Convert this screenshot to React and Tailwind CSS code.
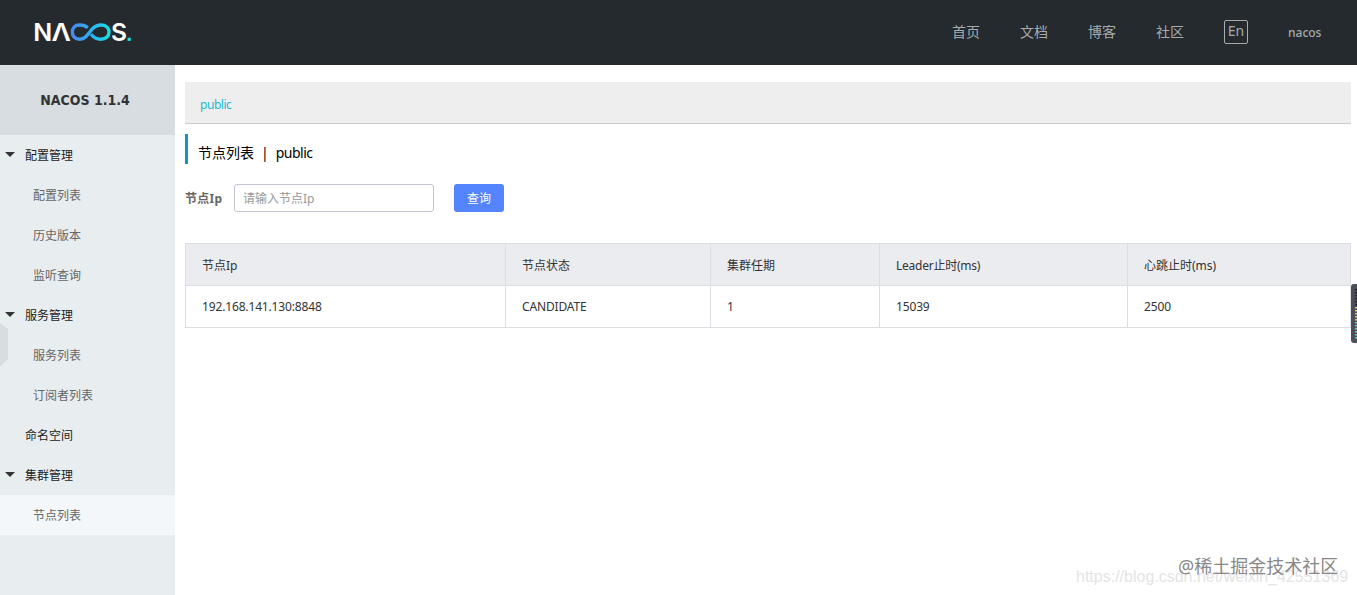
import { useState } from "react";

const navLinks = ["首页", "文档", "博客", "社区"];

const menu = [
  { title: "配置管理", children: ["配置列表", "历史版本", "监听查询"] },
  { title: "服务管理", children: ["服务列表", "订阅者列表"] },
  { title: "命名空间" },
  { title: "集群管理", children: ["节点列表"] },
];

const columns = ["节点Ip", "节点状态", "集群任期", "Leader止时(ms)", "心跳止时(ms)"];
const rows = [["192.168.141.130:8848", "CANDIDATE", "1", "15039", "2500"]];

function Logo() {
  return (
    <svg width="104" height="40" viewBox="-2 -8.5 104 40" className="ml-[31px] font-['Inter',sans-serif]">
      <defs>
        <linearGradient id="loop" x1="38" y1="0" x2="78" y2="0" gradientUnits="userSpaceOnUse">
          <stop offset="0" stopColor="#4a86f0" />
          <stop offset="0.5" stopColor="#2fb0ee" />
          <stop offset="1" stopColor="#17e0e3" />
        </linearGradient>
      </defs>
      <g fill="#fff" fontSize="24" fontWeight="600">
        <text x="0.3" y="19.3" textLength="19" lengthAdjust="spacingAndGlyphs">N</text>
        <text x="18.6" y="19.3" textLength="19.4" lengthAdjust="spacingAndGlyphs">Λ</text>
        <text x="78" y="19.3" textLength="16" lengthAdjust="spacingAndGlyphs">S</text>
      </g>
      <path
        d="M54.8 6.2C52.5 4.3 50 3.5 46.8 3.5C42 3.5 39.3 6.3 39.3 10.6S42 17.7 46.8 17.7C51.5 17.7 53.8 14.8 56.6 10.8C59.5 6.3 62.3 3.5 67.8 3.5C73 3.5 76 6.3 76 10.6S73 17.7 67.8 17.7C63.3 17.7 60.5 16 58 12.8"
        fill="none"
        stroke="url(#loop)"
        strokeWidth="3.4"
      />
      <rect x="94.6" y="16.2" width="3.2" height="3.2" fill="#17e0e3" />
    </svg>
  );
}

function Header() {
  return (
    <header className="flex h-[65px] items-center bg-[#252a2f] text-[#a8aaac]">
      <Logo />
      <nav className="ml-auto flex items-center gap-10 pr-9 pb-0.5 text-sm">
        {navLinks.map((link) => (
          <a key={link} className="w-7 whitespace-nowrap">{link}</a>
        ))}
        <span className="flex h-6 w-6 items-center justify-center rounded-xs border border-[#a8aaac] pb-0.5">
          En
        </span>
        <span className="w-[33px] pt-0.5 text-xs font-medium">nacos</span>
      </nav>
    </header>
  );
}

function Sidebar() {
  return (
    <aside className="relative h-[530px] w-[175px] shrink-0 bg-[#e8edf0]">
      <h1 className="flex h-[70px] items-center justify-center bg-[#d7dde1] pr-[5px] font-['DejaVu_Sans_Condensed','DejaVu_Sans',sans-serif] text-sm font-bold text-[#333]">
        NACOS 1.1.4
      </h1>
      <ul>
        {menu.map((group) => (
          <li key={group.title}>
            <div className="flex h-10 items-center pt-0.5 text-[#222]">
              <span className="flex w-[25px] pb-1 pl-[5px]">
                {group.children && (
                  <svg width="10" height="5" viewBox="0 0 10 5">
                    <path d="M0 0h10L5 5z" fill="#333" />
                  </svg>
                )}
              </span>
              {group.title}
            </div>
            {group.children?.map((item) => (
              <div
                key={item}
                className={`flex h-10 items-center pt-0.5 pl-[33px] text-[#666] ${item === "节点列表" ? "bg-[#f4f7f9]" : ""}`}
              >
                {item}
              </div>
            ))}
          </li>
        ))}
      </ul>
      {/* collapse handle */}
      <svg width="8" height="44" viewBox="0 0 8 44" className="absolute top-[258px] left-0">
        <path d="M0 0L8 6V36L0 44z" fill="#d7dde0" />
      </svg>
    </aside>
  );
}

function NodeTable() {
  return (
    <table className="mt-[31px] w-[1166px] table-fixed border-collapse text-left text-[#333]">
      <colgroup>
        <col className="w-[320px]" />
        <col className="w-[205px]" />
        <col className="w-[169px]" />
        <col className="w-[248px]" />
        <col />
      </colgroup>
      <thead>
        <tr className="h-[42px] bg-[#ebecf0]">
          {columns.map((col) => (
            <th
              key={col}
              className={`border border-[#dcdee3] px-4 pt-0.5 font-normal ${col.startsWith("Leader") ? "tracking-[-0.25px]" : ""}`}
            >
              {col}
            </th>
          ))}
        </tr>
      </thead>
      <tbody>
        {rows.map((row) => (
          <tr key={row[0]} className="h-[42px]">
            {row.map((cell) => (
              <td key={cell} className="border border-[#dcdee3] px-4 tracking-[-0.15px]">{cell}</td>
            ))}
          </tr>
        ))}
      </tbody>
    </table>
  );
}

function SideMeter() {
  return (
    <svg width="6" height="60" viewBox="0 0 6 60" className="absolute top-[284px] right-0">
      <rect width="12" height="59" rx="3" fill="#4a4f5a" />
      {Array.from({ length: 17 }, (_, i) => (
        <rect
          key={i}
          x="4"
          y={5 + i * 3}
          width="2"
          height="1.5"
          fill={i < 6 ? "#23272f" : i < 11 ? "#d6cf55" : "#5fd0c0"}
        />
      ))}
    </svg>
  );
}

export default function App() {
  const [ip, setIp] = useState("");

  return (
    <div className="relative h-[595px] w-[1357px] overflow-hidden bg-white font-['Noto_Sans','Noto_Sans_CJK_SC',sans-serif] text-xs">
      <Header />
      <div className="flex">
        <Sidebar />
        <main className="flex-1 pt-[17px] pr-1.5 pl-2.5">
          <div className="flex h-[42px] items-center border-b border-[#ccc] bg-[#eee] pt-1 pl-[15px] tracking-[-0.45px] text-[#1ab9d0]">
            public
          </div>
          <h2 className="mt-2.5 flex h-[30px] items-center border-l-3 border-[#0f98bd] pt-2 pl-2.5 text-sm text-black">
            <span>节点列表</span>
            <span className="mx-[7px]">|</span>
            <span className="tracking-[-0.5px]">public</span>
          </h2>
          <div className="mt-5 flex h-7 items-center">
            <label htmlFor="ip" className="w-[49px] pt-0.5 font-bold tracking-[0.3px] text-[#666]">节点Ip</label>
            <input
              id="ip"
              type="text"
              value={ip}
              onChange={(e) => setIp(e.target.value)}
              placeholder="请输入节点Ip"
              className="h-7 w-[200px] rounded-[3px] border border-[#c4c6cf] px-2 placeholder:text-[#999]"
            />
            <button className="ml-5 h-7 w-[50px] rounded-[3px] bg-[#5584ff] pt-0.5 text-white">查询</button>
          </div>
          <NodeTable />
        </main>
      </div>
      <SideMeter />
      <span className="absolute top-[567px] left-[1076px] font-['Liberation_Sans',sans-serif] text-base leading-5 whitespace-nowrap text-[#e4e4e4]">
        https://blog.csdn.net/weixin_42551369
      </span>
      <span className="absolute top-[554px] left-[1178px] text-lg leading-6 whitespace-nowrap text-[#888]">
        @稀土掘金技术社区
      </span>
    </div>
  );
}
